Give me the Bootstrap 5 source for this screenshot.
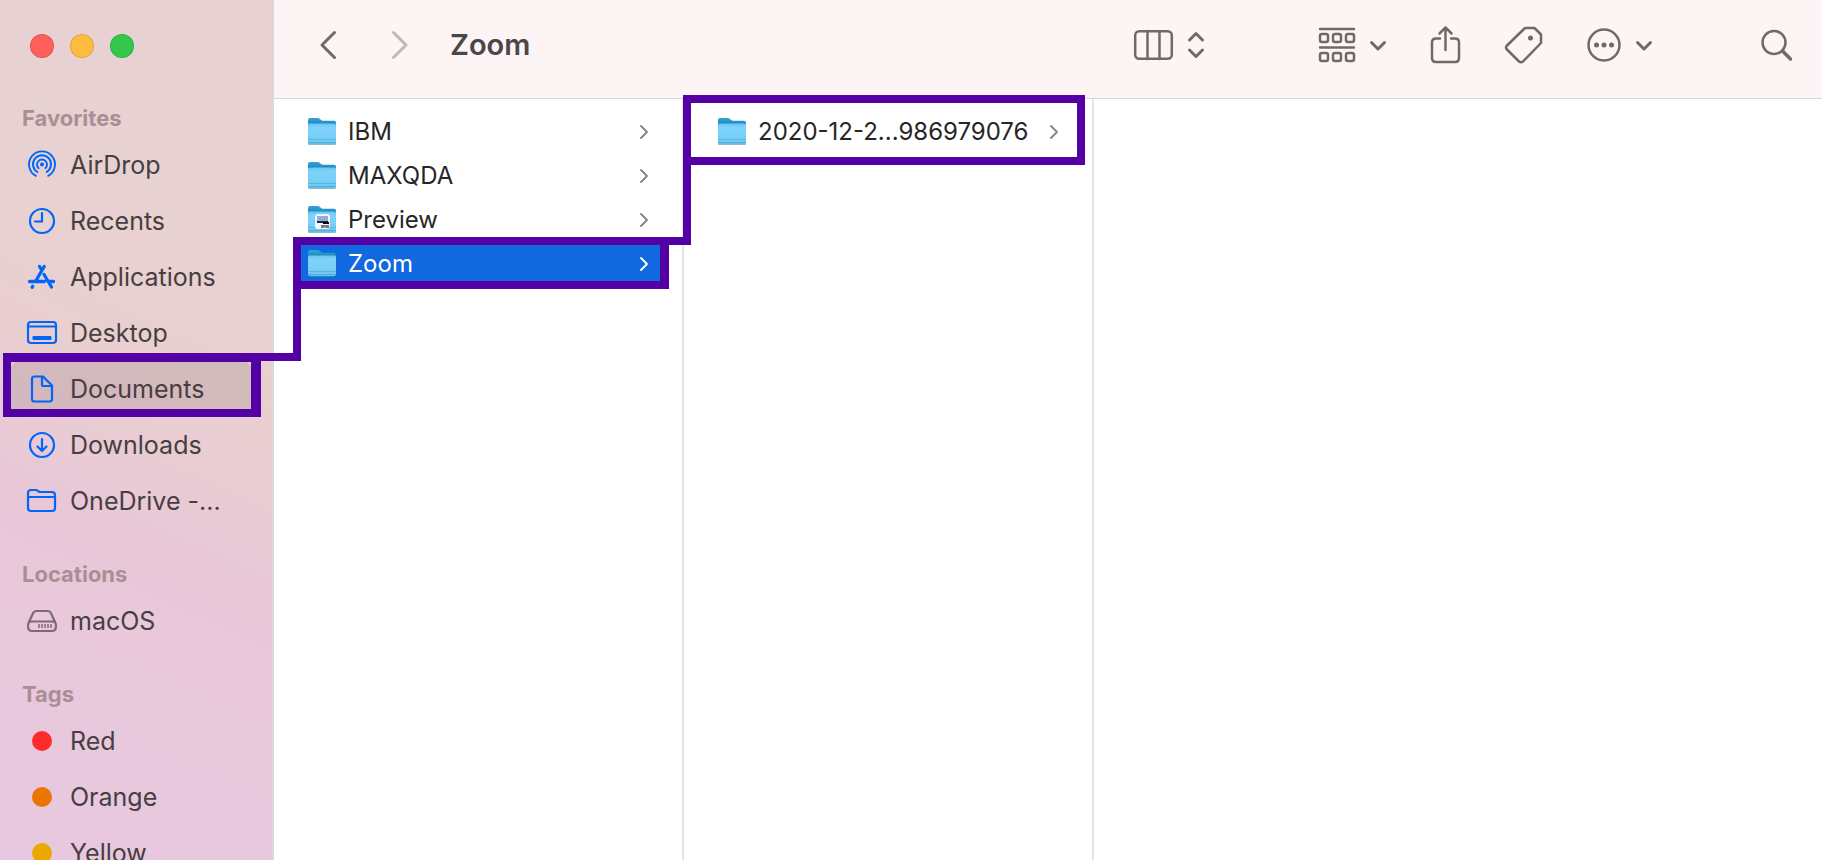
<!DOCTYPE html>
<html lang="en">
<head>
<meta charset="utf-8">
<meta name="viewport" content="width=device-width, initial-scale=1">
<title>Zoom</title>
<link href="https://cdn.jsdelivr.net/npm/bootstrap@5.3.0/dist/css/bootstrap.min.css" rel="stylesheet">
<style>
  :root { --trail: #5300a5; --accent: #0066f8; --ink: #736869; }
  body { font-family: Inter, "Liberation Sans", sans-serif; background: #fff; }
  svg { display: block; flex: none; fill: none; stroke: currentColor; stroke-linecap: round; stroke-linejoin: round; overflow: visible; }

  .side-pane {
    width: 274px; border-right: 2px solid #dcd8d9;
    background: linear-gradient(204deg, #e8d0d3 0%, #e8d2d1 24%, #e9d0d0 40%, #eacdd2 48%, #e8c8d7 60%, #e8c8dc 82%, #e8c8e0 100%);
  }
  .window-dots { height: 73px; padding: 34px 30px 0; gap: 16px; }
  .window-dots button { width: 24px; height: 24px; border: 1px solid #0000001f; border-radius: 50%; padding: 0; }
  .dot-close { background: #ff605c; }
  .dot-min { background: #fdbc40; }
  .dot-zoom { background: #34c84a; }

  .side-title { font-size: 22px; line-height: 38px; font-weight: 700; color: #a98f95; padding: 26px 22px 0; margin: 0; }
  .side-list { margin: 0 20px 0 10px; }
  .side-link { height: 56px; padding: 0 0 0 17px; gap: 13px; font-size: 25px; line-height: 32px; color: #473e42; border-radius: 10px; white-space: nowrap; text-decoration: none; }
  .side-link svg { color: var(--accent); stroke-width: 2.2; }
  .side-link.active { background: #00000019; }
  .side-link .drive-icon { color: #7c6b74; }
  .tag-dot { width: 20px; height: 20px; margin: 0 5px; border-radius: 50%; }
  .tag-red { background: #ff2a2b; }
  .tag-orange { background: #eb7500; }
  .tag-yellow { background: #eaa900; }

  .tool-row { height: 99px; padding: 0 30px 8px 46px; background: #fdf4f5; border-bottom: 1px solid #d9d4d5; color: var(--ink); }
  .tool-row button { border: 0; background: none; padding: 0; color: inherit; }
  .tool-row button:disabled { color: #c1b8b9; }
  .tool-row svg { stroke-width: 2.5; }
  .tool-row .bold-icon { stroke-width: 3; }
  .folder-name { font-size: 29px; line-height: 40px; font-weight: 600; color: #4a4748; margin: 0 0 0 42px; }
  .tool-set { gap: 45px; }
  .tool-set button { gap: 15px; }
  .wide-start { margin-left: 64px; }
  .wide-end { margin-right: 70px; }

  .file-col { width: 410px; padding: 11px 22px 0 27px; border-right: 2px solid #e4e4e4; }
  .file-link { height: 44px; padding: 0 12px 0 6px; gap: 11px; font-size: 24px; line-height: 32px; color: #262626; text-decoration: none; white-space: nowrap; }
  .file-link .row-arrow { color: #848484; stroke-width: 1.8; }
  .file-link.active { background: #1168df; color: #fff; }
  .file-link.active .row-arrow { color: #fff; }

  /* highlight trail laid over the chosen entries */
  .trail-box, .trail-join { position: absolute; border: 0 solid var(--trail); pointer-events: none; z-index: 2; }
  .trail-docs { inset: -8px -9px 0 -7px; border-width: 9px 10px 8px 8px; }
  .trail-zoom { inset: -5px -9px -3px -8px; border-width: 8px 9px 8px 8px; }
  .trail-date { inset: -15px -15px -11px -28px; border-width: 8px; }
  .trail-join { border-width: 0 8px 8px 0; }
  .join-docs { left: -40px; top: -5px; width: 40px; height: 124px; }
  .join-date { left: -42px; top: 55px; width: 22px; height: 80px; }
</style>
</head>
<body class="vh-100 overflow-hidden d-flex">

<svg width="0" height="0" class="position-absolute" aria-hidden="true">
  <defs>
    <linearGradient id="backFill" x1="0" y1="0" x2="0" y2="1"><stop offset="0" stop-color="#36a3d9"/><stop offset=".35" stop-color="#1b86bf"/></linearGradient>
    <linearGradient id="frontFill" x1="0" y1="0" x2="0" y2="1"><stop offset="0" stop-color="#69c6f1"/><stop offset=".2" stop-color="#7fd3fb"/><stop offset=".8" stop-color="#74cdf6"/><stop offset="1" stop-color="#5cb9e4"/></linearGradient>
    <symbol id="folder" viewBox="0 0 30 30">
      <path d="M2 27h26" stroke="#000" stroke-opacity=".28" stroke-width="2"/>
      <path d="M1 3q0-2 2-2h7.500q1.500 0 2.500 1l1 1q.6.800 2 .8h11q2 0 2 2V20H1z" fill="url(#backFill)" stroke="none"/>
      <path d="M1 8q0-1.500 1.500-1.500h25q1.500 0 1.500 1.500V25.500q0 2-2 2H3q-2 0-2-2z" fill="url(#frontFill)" stroke="none"/>
      <path d="M1.500 22.500h27M1.500 25.500h27" stroke="#4fa9d3" stroke-width="1" stroke-opacity=".7"/>
    </symbol>
    <symbol id="arrow" viewBox="0 0 8 14"><path d="M1 1l6 6-6 6"/></symbol>
  </defs>
</svg>

<aside class="side-pane flex-shrink-0">
  <div class="window-dots d-flex">
    <button type="button" class="dot-close" aria-label="Close"></button>
    <button type="button" class="dot-min" aria-label="Minimize"></button>
    <button type="button" class="dot-zoom" aria-label="Full screen"></button>
  </div>

  <h2 class="side-title">Favorites</h2>
  <nav class="side-list" aria-label="Favorites">
    <a href="#" class="side-link d-flex align-items-center">
      <svg width="30" height="30" viewBox="0 0 30 30"><circle cx="15" cy="14.500" r="2" fill="currentColor" stroke="none"/><path stroke-width="1.900" d="M11.600 18.200a5 5 0 1 1 6.800 0M10.400 22a9 9 0 1 1 9.200 0M8.800 25.800a13 13 0 1 1 12.400 0"/></svg>AirDrop</a>
    <a href="#" class="side-link d-flex align-items-center">
      <svg width="30" height="30" viewBox="0 0 30 30"><circle cx="15" cy="15" r="12"/><path d="M15 7v8.500H8"/></svg>Recents</a>
    <a href="#" class="side-link d-flex align-items-center">
      <svg width="30" height="30" viewBox="0 0 30 30"><path stroke-width="3.300" d="M2.500 19.500h15M22.500 19.500h4M17.200 4.500L9 18.500M12.500 4.500l2 3.200M17 12.500l7.500 12.500M5.700 24.300l-.6 1"/></svg>Applications</a>
    <a href="#" class="side-link d-flex align-items-center">
      <svg width="30" height="30" viewBox="0 0 30 30"><rect x="1" y="4" width="28" height="21" rx="3"/><path d="M1.500 8.500h27"/><rect x="5.500" y="18" width="19" height="4" rx="1" fill="currentColor" stroke="none"/></svg>Desktop</a>
    <a href="#" class="side-link active position-relative d-flex align-items-center" aria-current="page">
      <svg width="30" height="30" viewBox="0 0 30 30"><path d="M7.500 2.500h8.500l9 9V25q0 2.500-2.500 2.500h-15Q5 27.500 5 25V5q0-2.500 2.500-2.500zM15 3v7.500q0 1.500 1.500 1.500H24"/></svg>Documents
      <span class="trail-box trail-docs"></span></a>
    <a href="#" class="side-link d-flex align-items-center">
      <svg width="30" height="30" viewBox="0 0 30 30"><circle cx="15" cy="15" r="12"/><path d="M15 9v11.500M10.500 16.500l4.500 4.500 4.500-4.500"/></svg>Downloads</a>
    <a href="#" class="side-link d-flex align-items-center">
      <svg width="30" height="30" viewBox="0 0 30 30"><path d="M1 22V7q0-3 3-3h4.500q1.500 0 2.300.8l1 .7q.7.500 2 .5H25q3 0 3 3v13q0 3-3 3H4q-3 0-3-3zM1.500 11h26"/></svg>OneDrive -...</a>
  </nav>

  <h2 class="side-title">Locations</h2>
  <nav class="side-list" aria-label="Locations">
    <a href="#" class="side-link d-flex align-items-center">
      <svg class="drive-icon" width="30" height="30" viewBox="0 0 30 30"><path d="M1.500 17L6 7.200Q7 5 9 5h12q2 0 3 2.200L28.500 17Q29 18 29 20q0 5-4 5H5q-4 0-4-5 0-2 .5-3zM2 16.500q1-1 3-1h20q2 0 3 1"/><path stroke-linecap="butt" stroke-width="1.500" d="M12 18v4M15 18v4M18 18v4M21 18v4M24 18v4"/></svg>macOS</a>
  </nav>

  <h2 class="side-title">Tags</h2>
  <nav class="side-list" aria-label="Tags">
    <a href="#" class="side-link d-flex align-items-center"><span class="tag-dot tag-red"></span>Red</a>
    <a href="#" class="side-link d-flex align-items-center"><span class="tag-dot tag-orange"></span>Orange</a>
    <a href="#" class="side-link d-flex align-items-center"><span class="tag-dot tag-yellow"></span>Yellow</a>
  </nav>
</aside>

<main class="flex-grow-1 d-flex flex-column">
  <header class="tool-row d-flex align-items-center">
    <button type="button" aria-label="Back"><svg class="bold-icon" width="16" height="28" viewBox="0 0 16 28"><path d="M14.500 1.500L2 14l12.500 12.500"/></svg></button>
    <button type="button" class="ms-5 ps-2" aria-label="Forward" disabled><svg class="bold-icon" width="16" height="28" viewBox="0 0 16 28"><path d="M1.500 1.500L14 14 1.500 26.500"/></svg></button>
    <h1 class="folder-name">Zoom</h1>
    <div class="tool-set d-flex align-items-center ms-auto">
      <button type="button" class="wide-end d-flex align-items-center" aria-label="Column view">
        <svg width="39" height="30" viewBox="0 0 39 30"><rect x="1.200" y="1.200" width="36.600" height="27.600" rx="4"/><path d="M13.500 1v28M25.500 1v28"/></svg>
        <svg class="bold-icon" width="16" height="26" viewBox="0 0 16 26"><path d="M1.500 8L8 1.500 14.500 8M1.500 18L8 24.500l6.500-6.500"/></svg>
      </button>
      <button type="button" class="d-flex align-items-center" aria-label="Group items">
        <svg width="36" height="36" viewBox="0 0 36 36"><path d="M1 2h34M1 20.500h34"/><rect x="1" y="7" width="8" height="8" rx="2"/><rect x="14" y="7" width="8" height="8" rx="2"/><rect x="27" y="7" width="8" height="8" rx="2"/><rect x="1" y="26" width="8" height="8" rx="2"/><rect x="14" y="26" width="8" height="8" rx="2"/><rect x="27" y="26" width="8" height="8" rx="2"/></svg>
        <svg class="bold-icon" width="16" height="10" viewBox="0 0 16 10"><path d="M1.500 2.500L8 9l6.500-6.500"/></svg>
      </button>
      <button type="button" aria-label="Share"><svg width="29" height="38" viewBox="0 0 29 38"><path d="M9 12.500H5q-4 0-4 4V32q0 4 4 4h19q4 0 4-4V16.500q0-4-4-4h-4M14.500 24V2M8.500 7.500L14.500 1.500l6 6"/></svg></button>
      <button type="button" aria-label="Tags"><svg width="37" height="38" viewBox="0 0 37 38"><path d="M20 2h9.500l6.500 6.500V17L18 35.500q-2 1.500-4 0L2 23.500q-2-2 0-4z"/><circle cx="25.500" cy="12" r="2.500" fill="currentColor" stroke="none"/></svg></button>
      <button type="button" class="d-flex align-items-center" aria-label="More">
        <svg width="34" height="34" viewBox="0 0 34 34"><circle cx="17" cy="17" r="15.500"/><g fill="currentColor" stroke="none"><circle cx="9.500" cy="17" r="2.500"/><circle cx="17" cy="17" r="2.500"/><circle cx="24.500" cy="17" r="2.500"/></g></svg>
        <svg class="bold-icon" width="16" height="10" viewBox="0 0 16 10"><path d="M1.500 2.500L8 9l6.500-6.500"/></svg>
      </button>
      <button type="button" class="wide-start" aria-label="Search"><svg width="31" height="31" viewBox="0 0 31 31"><circle cx="13" cy="12.500" r="11.500"/><path stroke-width="3.500" d="M21.500 21l8 8"/></svg></button>
    </div>
  </header>

  <div class="d-flex flex-grow-1">
    <div class="file-col">
      <a href="#" class="file-link d-flex align-items-center"><svg width="30" height="30"><use href="#folder"/></svg>IBM<svg class="row-arrow ms-auto" width="8" height="14"><use href="#arrow"/></svg></a>
      <a href="#" class="file-link d-flex align-items-center"><svg width="30" height="30"><use href="#folder"/></svg>MAXQDA<svg class="row-arrow ms-auto" width="8" height="14"><use href="#arrow"/></svg></a>
      <a href="#" class="file-link d-flex align-items-center"><svg width="30" height="30"><use href="#folder"/><g stroke="none"><rect x="8" y="9" width="15" height="15" rx="3" fill="#f3f6fa"/><rect x="10" y="11" width="11" height="6" fill="#8eaee6"/><rect x="10" y="16" width="11" height="2" fill="#1c2740"/><path d="M14 20h8v3h-3l-1-1-1 1h-3z" fill="#77797c"/><path d="M16 17h6v2h-6z" fill="#000"/></g></svg>Preview<svg class="row-arrow ms-auto" width="8" height="14"><use href="#arrow"/></svg></a>
      <a href="#" class="file-link active position-relative d-flex align-items-center" aria-current="true"><svg width="30" height="30"><use href="#folder"/></svg>Zoom<svg class="row-arrow ms-auto" width="8" height="14"><use href="#arrow"/></svg>
        <span class="trail-box trail-zoom"></span><span class="trail-join join-docs"></span></a>
    </div>
    <div class="file-col">
      <a href="#" class="file-link position-relative d-flex align-items-center"><svg width="30" height="30"><use href="#folder"/></svg>2020-12-2...986979076<svg class="row-arrow ms-auto" width="8" height="14"><use href="#arrow"/></svg>
        <span class="trail-box trail-date"></span><span class="trail-join join-date"></span></a>
    </div>
  </div>
</main>

<script src="https://cdn.jsdelivr.net/npm/bootstrap@5.3.0/dist/js/bootstrap.bundle.min.js"></script>
</body>
</html>
